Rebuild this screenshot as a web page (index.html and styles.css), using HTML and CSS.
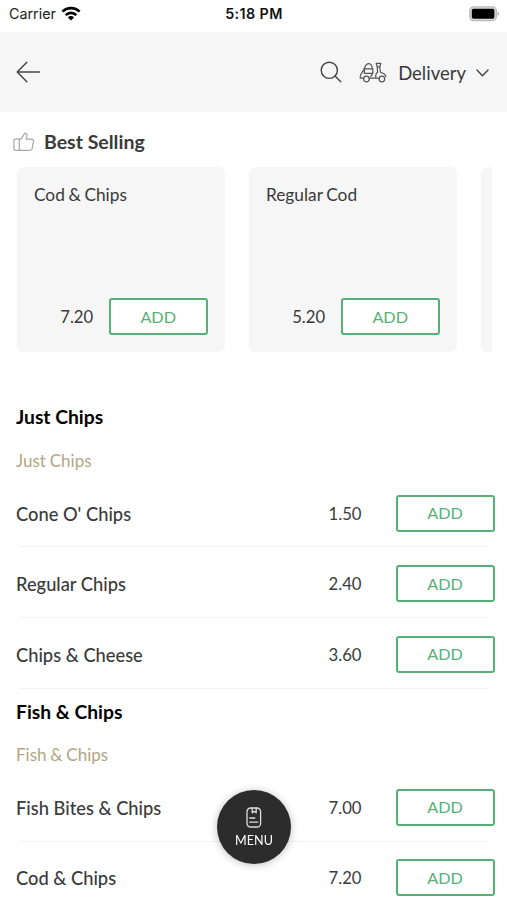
FILE: index.html
```html
<!DOCTYPE html>
<html lang="en">
<head>
<meta charset="utf-8">
<title>Menu</title>
<link rel="stylesheet" href="styles.css">
</head>
<body>
<div class="status">
  <div class="carrier"><span>Carrier</span>
    <svg class="wifi" width="20" height="16" viewBox="0 0 20 16"><g fill="none" stroke="#000" stroke-width="2.7"><path d="M1.4 5.6a12.2 12.2 0 0 1 17.2 0"/><path d="M4.7 9.1a7.5 7.5 0 0 1 10.6 0"/></g><path d="M6.9 11.4a4.4 4.4 0 0 1 6.2 0L10 14.6z"/></svg>
  </div>
  <div class="time">5:18 PM</div>
  <svg class="battery" width="31" height="16" viewBox="0 0 31 16"><rect x=".8" y=".8" width="26.6" height="13.8" rx="4" fill="#ddd" stroke="#bbb" stroke-width="1.3"/><rect x="2.8" y="2.800" width="22.600" height="9.900" rx="1.600"/><path d="M28.600 5.300q3 2.400 0 4.800z" fill="#aaa"/></svg>
</div>
<header class="header">
  <svg class="back" width="26" height="22" viewBox="0 0 26 22"><path d="M23.500 11H1.200M10.800 1.200L1.200 11l9.600 9.800"/></svg>
  <div class="tools">
    <svg class="search" width="22" height="22" viewBox="0 0 22 22"><circle cx="9.300" cy="9.300" r="8.100"/><path d="M15.100 15.100l5.600 5.600"/></svg>
    <svg class="scooter" width="28" height="21" viewBox="0 0 28 21"><path d="M4.200 16.200H1.200q-.4-3 1.200-4.600 1-3 3-3.800M4.600 6.800h9.400M5.600 6.600q.4-3.400 2.200-4.400 1.800-1.200 3.800 0 1.500 1.200 1.700 4.400M5.400 7.800v3.600h8.400V7M13.800 11.400l-2 3M10.600 16.200h6.200q-.6-4.400 1.800-6l-.4-5.400M17.200 1.400h4.600l-1 3.400h-2.600zM20.800 5l.6 5.200 3.600 1.600q1.800 1.200 1.800 2.800M16.800 16.200h3"/><circle cx="7.400" cy="17" r="2.800"/><circle cx="22.900" cy="17" r="2.800"/></svg>
    <span class="mode">Delivery</span>
    <svg class="chevron" width="13" height="8" viewBox="0 0 13 8"><path d="M1 1l5.500 5.700L12 1"/></svg>
  </div>
</header>
<main>
  <div class="best">
    <svg width="22" height="20" viewBox="0 0 22 20"><path d="M6.300 7.600l1.800-.8L11 2.600q.3-1.900 1.900-1.300 1.600.8 1 3.200l-.8 2.600h5.300q2.200.1 2.200 2l-1.400 7.300q-.5 2-2.400 2H8.200q-1.900-.2-1.900-2zM6.300 6.900H3.100Q.9 6.900.9 9v6.900q0 2.200 2.100 2.500h4.100"/></svg>
    <h2>Best Selling</h2>
  </div>
  <div class="cards">
    <article class="card"><h3>Cod &amp; Chips</h3><div class="buy"><span class="price">7.20</span><button class="add">ADD</button></div></article>
    <article class="card"><h3>Regular Cod</h3><div class="buy"><span class="price">5.20</span><button class="add">ADD</button></div></article>
    <article class="card"></article>
  </div>
  <section class="group">
    <h2 class="title">Just Chips</h2>
    <p class="subtitle">Just Chips</p>
    <div class="row"><span class="name">Cone O' Chips</span><span class="price">1.50</span><button class="add">ADD</button></div>
    <div class="row"><span class="name">Regular Chips</span><span class="price">2.40</span><button class="add">ADD</button></div>
    <div class="row"><span class="name">Chips &amp; Cheese</span><span class="price">3.60</span><button class="add">ADD</button></div>
  </section>
  <section class="group">
    <h2 class="title">Fish &amp; Chips</h2>
    <p class="subtitle">Fish &amp; Chips</p>
    <div class="row"><span class="name">Fish Bites &amp; Chips</span><span class="price">7.00</span><button class="add">ADD</button></div>
    <div class="row"><span class="name">Cod &amp; Chips</span><span class="price">7.20</span><button class="add">ADD</button></div>
  </section>
</main>
<button class="menu">
  <svg width="16" height="22" viewBox="0 0 16 22"><rect x="1" y="1" width="13.600" height="19" rx="3.600"/><path d="M6.200 1.200v4.600l2-1.400 2 1.400V1.200M3.800 11h5M3.800 15.200h8"/></svg>
  <span>MENU</span>
</button>
</body>
</html>
```
FILE: styles.css
```css
* { box-sizing: border-box; margin: 0; padding: 0; }
body { height: 900px; overflow: hidden; background: #fff; color: #3a3a3a; font-family: Lato, sans-serif; }
svg { display: block; flex: none; fill: none; stroke-linecap: round; stroke-linejoin: round; }
.status { height: 32px; display: grid; grid-template-columns: 1fr auto 1fr; align-items: center; padding: 0 8px 5px 9px; font-family: Inter, sans-serif; color: #222; }
.carrier { display: flex; align-items: center; gap: 5px; font-size: 14.300px; }
.wifi, .battery { fill: #000; stroke-linecap: butt; }
.battery { margin-right: -1px; }
.time { font-size: 14.300px; letter-spacing: .4px; font-weight: 600; color: #111; }
.battery { justify-self: end; }
.header { height: 80px; background: #f6f6f6; display: flex; align-items: center; justify-content: space-between; padding: 0 18px 0 16px; }
.back, .search, .chevron { stroke: #444; stroke-width: 1.400; }
.chevron { margin-top: 2px; }
.tools { display: flex; align-items: center; }
.scooter { margin: 0 11px 0 17px; stroke: #555; stroke-width: 1.250; }
.mode { font-size: 18.500px; margin-right: 10px; padding-top: 1px; }
.best { height: 55px; padding: 5px 0 0 13px; display: flex; align-items: center; gap: 9px; }
.best svg { stroke: #aaa; stroke-width: 1.300; }
.best h2 { font-size: 19.500px; padding-bottom: 2px; }
.cards { display: flex; gap: 24.300px; margin: 0 15px 0 17px; overflow: hidden; }
.card { flex: none; width: 207.700px; height: 185px; border-radius: 7px; background: #f6f6f6; padding: 17px; display: flex; flex-direction: column; justify-content: space-between; }
.card h3 { font-size: 17.300px; font-weight: 400; line-height: 22px; word-spacing: -.8px; }
.buy { display: flex; justify-content: flex-end; align-items: center; gap: 15.500px; }
.price { font-size: 16.700px; }
.add { width: 99px; height: 37px; flex: none; border: 2px solid #55b176; border-radius: 3px; background: #fff; color: #55b176; font: 400 16.200px Lato, sans-serif; padding-bottom: 1px; }
.cards + .group { margin-top: 42.400px; }
.title { height: 44.400px; line-height: 45px; padding-left: 16px; font-size: 19.300px; color: #000; }
.subtitle { height: 38px; line-height: 44.400px; padding-left: 16px; font-size: 17px; color: #b5a583; word-spacing: -.5px; }
.row { height: 70.600px; padding: 2px 12.500px 0 16px; display: flex; align-items: center; background: linear-gradient(#f2f2f2, #f2f2f2) 19px 100% / calc(100% - 38px) 1px no-repeat; }
.name { flex: 1; font-size: 18.300px; font-weight: 500; padding-top: 1px; }
.row .price { margin-right: 34px; padding-top: 1px; }
.menu { position: fixed; left: 217px; top: 790px; width: 74px; height: 74px; border: 0; border-radius: 50%; background: #2c2c2c; color: #fff; box-shadow: 0 1px 9px rgba(0,0,0,.25); display: flex; flex-direction: column; align-items: center; padding-top: 17px; gap: 4px; font: 400 12.600px Lato, sans-serif; }
.menu svg { stroke: #ddd; stroke-width: 1.300; }
```
